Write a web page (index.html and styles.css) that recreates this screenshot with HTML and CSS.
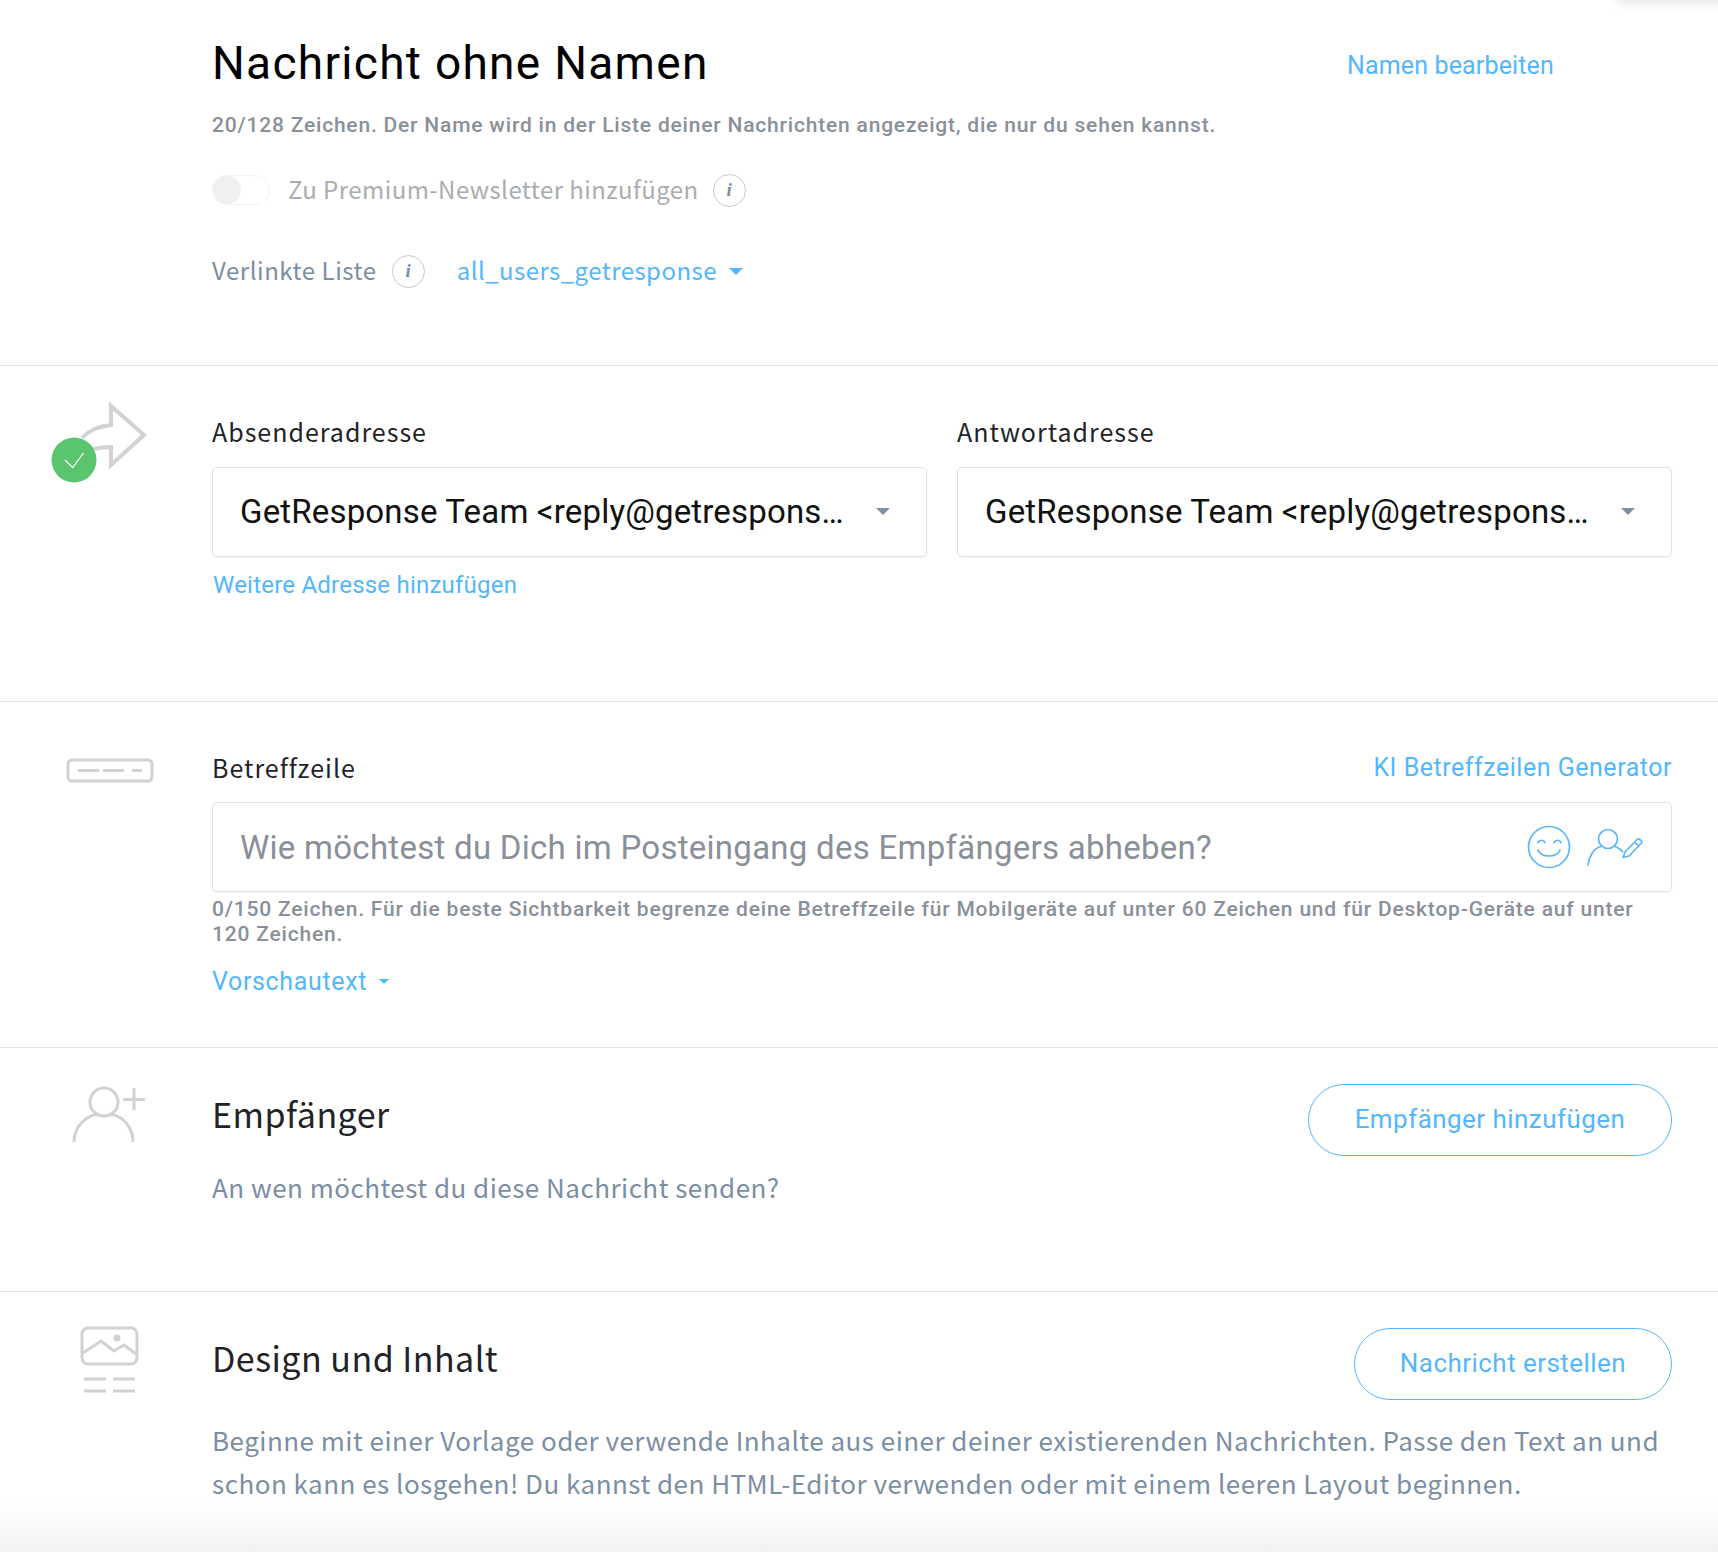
FILE: index.html
```html
<!DOCTYPE html>
<html lang="de">
<head>
<meta charset="utf-8">
<title>Nachricht ohne Namen</title>
<link rel="stylesheet" href="styles.css">
</head>
<body>
<div class="corner-shadow"></div>
<main class="page">
  <section class="head">
    <div class="title-row">
      <h1 class="title">Nachricht ohne Namen</h1>
      <a class="link edit">Namen bearbeiten</a>
    </div>
    <p class="hint hint-name">20/128 Zeichen. Der Name wird in der Liste deiner Nachrichten angezeigt, die nur du sehen kannst.</p>
    <div class="premium">
      <span class="toggle"><span class="knob"></span></span>
      <span class="premium-label">Zu Premium-Newsletter hinzufügen</span>
      <span class="info">i</span>
    </div>
    <div class="list-row">
      <span class="list-label">Verlinkte Liste</span>
      <span class="info">i</span>
      <a class="link list-link">all_users_getresponse</a>
      <span class="caret caret-blue"></span>
    </div>
  </section>

  <section class="row row-from">
    <div class="icon-col">
      <svg class="ic-from" width="100" height="90" viewBox="0 0 100 90">
        <path d="M32 42C40 33 50 30 61 29V10L94 39L61 69V51C54 51 48 52 43 53" fill="none" stroke="#d2d2d2" stroke-width="4"/>
        <circle cx="24" cy="64" r="22.5" fill="#5bc46f"/>
        <path d="M15 64L22.700 71.700L33.500 57" fill="none" stroke="#fff" stroke-width="1.200"/>
      </svg>
    </div>
    <div class="content">
      <div class="two-col">
        <div class="field">
          <label class="label">Absenderadresse</label>
          <div class="select"><span class="select-text">GetResponse Team &lt;reply@getrespons…</span><span class="caret caret-grey"></span></div>
          <a class="link add-address">Weitere Adresse hinzufügen</a>
        </div>
        <div class="field">
          <label class="label">Antwortadresse</label>
          <div class="select"><span class="select-text">GetResponse Team &lt;reply@getrespons…</span><span class="caret caret-grey"></span></div>
        </div>
      </div>
    </div>
  </section>

  <section class="row row-subject">
    <div class="icon-col">
      <svg class="ic-subject" width="88" height="28" viewBox="0 0 88 28">
        <rect x="2" y="3" width="84" height="21" rx="4" fill="none" stroke="#d2d2d2" stroke-width="3"/>
        <path d="M13 13.500H32M38 13.500H57M67 13.500H75" stroke="#d2d2d2" stroke-width="3" stroke-linecap="round"/>
      </svg>
    </div>
    <div class="content">
      <div class="label-row">
        <label class="label">Betreffzeile</label>
        <a class="link ki">KI Betreffzeilen Generator</a>
      </div>
      <div class="subject">
        <span class="placeholder">Wie möchtest du Dich im Posteingang des Empfängers abheben?</span>
        <svg class="ic-smile" width="44" height="44" viewBox="0 0 44 44" fill="none" stroke="#5ab8f5" stroke-width="1.700" stroke-linecap="round">
          <circle cx="22" cy="22" r="20.500"/>
          <path d="M11 17.500C12.500 14.500 16.500 14.500 18 17.500M27 17.500C28.500 14.500 32.500 14.500 34 17.500M11 25C14 33 30 33 33 25"/>
        </svg>
        <svg class="ic-person" width="56" height="38" viewBox="0 0 56 38" fill="none" stroke="#5ab8f5" stroke-width="1.700" stroke-linecap="round" stroke-linejoin="round">
          <circle cx="21" cy="11" r="9.500"/>
          <path d="M1 37C2 28 7 20 14 18.500M28 18.500C31 19.500 33.500 21 35.500 23.500"/>
          <path d="M36 29.500L38 24L50 11.500C52 9.500 56 13 54 15.500L42 28Z M47.500 14L51.500 18"/>
        </svg>
      </div>
      <p class="hint hint-subject">0/150 Zeichen. Für die beste Sichtbarkeit begrenze deine Betreffzeile für Mobilgeräte auf unter 60 Zeichen und für Desktop-Geräte auf unter 120 Zeichen.</p>
      <div class="preview"><a class="link preview-link">Vorschautext</a><span class="caret caret-blue caret-small"></span></div>
    </div>
  </section>

  <section class="row row-recipients">
    <div class="icon-col">
      <svg class="ic-recipient" width="76" height="58" viewBox="0 0 76 58" fill="none" stroke="#d2d2d2" stroke-width="3">
        <circle cx="32" cy="16" r="14"/>
        <path d="M2 56C2 41 14 29 26 28.500M38 28.500C50 29 61 41 61 56"/>
        <path d="M51 13.500H73M62 2V24"/>
      </svg>
    </div>
    <div class="content action-content">
      <div class="action-row">
        <h2 class="heading">Empfänger</h2>
        <a class="button btn-recipient">Empfänger hinzufügen</a>
      </div>
      <p class="desc desc-recipient">An wen möchtest du diese Nachricht senden?</p>
    </div>
  </section>

  <section class="row row-design">
    <div class="icon-col">
      <svg class="ic-design" width="60" height="68" viewBox="0 0 60 68" fill="none" stroke="#d2d2d2" stroke-width="3">
        <rect x="2" y="2" width="55" height="36" rx="6"/>
        <path d="M3 27L21 15L34 25L44 19L56 28"/>
        <circle cx="37" cy="12" r="3.500" fill="#d2d2d2" stroke="none"/>
        <path d="M4 53H26M33 53H55M4 65H26M33 65H55"/>
      </svg>
    </div>
    <div class="content action-content">
      <div class="action-row">
        <h2 class="heading">Design und Inhalt</h2>
        <a class="button btn-design">Nachricht erstellen</a>
      </div>
      <p class="desc desc-design">Beginne mit einer Vorlage oder verwende Inhalte aus einer deiner existierenden Nachrichten. Passe den Text an und schon kann es losgehen! Du kannst den HTML-Editor verwenden oder mit einem leeren Layout beginnen.</p>
    </div>
  </section>
</main>
<div class="bottom-fade"></div>
</body>
</html>
```

FILE: styles.css
```css
* { box-sizing: border-box; }
html, body { margin: 0; padding: 0; }
body {
  width: 1718px;
  height: 1552px;
  overflow: hidden;
  position: relative;
  background: #fff;
  font-family: Roboto, "Liberation Sans", sans-serif;
  color: #1f2328;
}
.page { display: flex; flex-direction: column; }
p, h1, h2 { margin: 0; font-weight: 400; }
.link { color: #54b7fd; }

.head { height: 366px; padding: 34px 46px 0 212px; border-bottom: 1px solid #e3e3e3; }
.title-row { display: flex; justify-content: space-between; align-items: center; padding-right: 118px; }
.title { font-size: 46px; line-height: 58px; letter-spacing: 1.3px; color: #000; }
.edit { font-size: 25px; letter-spacing: 0.15px; margin-top: 5px; }
.hint { color: #8a9099; font-weight: 500; font-size: 21px; line-height: 25px; letter-spacing: 0.8px; }
.hint-name { margin-top: 21px; }
.premium { display: flex; align-items: center; margin-top: 35px; height: 34px; }
.toggle { width: 58px; height: 30px; border: 1px solid #f4f4f4; border-radius: 15px; margin-right: 18px; display: block; }
.knob { display: block; width: 28px; height: 28px; border-radius: 50%; background: #f0f0f0; }
.premium-label { font-family: "Noto Sans CJK JP", Lato, sans-serif; font-size: 24px; line-height: 34px; color: #a9adb1; letter-spacing: 0.44px; padding-bottom: 2px; }
.info {
  width: 33px; height: 33px; border: 1px solid #c9c9c9; border-radius: 50%;
  display: flex; align-items: center; justify-content: center;
  font: italic 700 19px "Liberation Serif", serif; color: #7c8ea3;
}
.premium .info { margin-left: 14px; }
.list-row { display: flex; align-items: center; margin-top: 47px; height: 34px; }
.list-label { font-family: "Noto Sans CJK JP", Lato, sans-serif; font-size: 24px; line-height: 34px; color: #7b8ea3; letter-spacing: 0.55px; margin-right: 15px; padding-bottom: 2px; }
.list-link { font-family: "Noto Sans CJK JP", Lato, sans-serif; font-size: 24px; line-height: 34px; letter-spacing: 0.44px; margin-left: 32px; padding-bottom: 2px; }
.caret { width: 0; height: 0; border-style: solid; border-color: transparent; border-width: 7px 7px 0 7px; display: block; }
.caret-blue { border-top-color: #54b7fd; margin-left: 12px; }
.caret-grey { border-top-color: #7f90a5; }
.caret-small { border-width: 5px 5px 0 5px; }

.row { display: flex; border-bottom: 1px solid #e3e3e3; }
.icon-col { width: 212px; flex: none; position: relative; }
.content { flex: 1; padding-right: 46px; min-width: 0; }

.row-from { height: 336px; }
.row-from .content { padding-top: 52px; }
.ic-from { display: block; margin: 30px 0 0 50px; }
.two-col { display: grid; grid-template-columns: 715px 715px; column-gap: 30px; }
.label { font-family: "Noto Sans CJK JP", Lato, sans-serif; font-size: 25px; line-height: 26px; padding-bottom: 4px; letter-spacing: 1px; color: #1f2328; display: block; }
.select {
  margin-top: 19px; height: 90px; border: 1px solid #e1e1e1; border-radius: 5px;
  display: flex; align-items: center; justify-content: space-between;
  padding: 0 36px 2px 27px; box-shadow: 0 1px 2px rgba(0,0,0,.05);
}
.select-text { font-size: 33px; letter-spacing: 0.17px; color: #111; }
.add-address { display: block; font-size: 24px; margin-top: 14px; letter-spacing: 0.22px; padding-left: 1px; }

.row-subject { height: 346px; }
.row-subject .content { padding-top: 52px; }
.ic-subject { display: block; margin: 55px 0 0 66px; }
.label-row { display: flex; justify-content: space-between; align-items: center; }
.ki { font-size: 25px; letter-spacing: 0.52px; margin-top: -3px; }
.subject {
  margin-top: 18px; height: 90px; border: 1px solid #e1e1e1; border-radius: 5px;
  display: flex; align-items: center; padding: 0 28px 0 27px; box-shadow: 0 1px 2px rgba(0,0,0,.05);
}
.placeholder { font-size: 33px; letter-spacing: 0.27px; color: #8a9099; flex: 1; }
.ic-smile { display: block; }
.ic-person { display: block; margin-left: 16px; }
.hint-subject { margin-top: 5px; }
.preview { display: flex; align-items: center; margin-top: 20px; }
.preview-link { font-size: 25px; letter-spacing: 0.65px; }

.row-recipients { height: 244px; }
.ic-recipient { display: block; margin: 38px 0 0 72px; }
.action-content { padding-top: 36px; }
.action-row { display: flex; justify-content: space-between; align-items: flex-start; }
.heading { font-family: "Noto Sans CJK JP", Lato, sans-serif; font-size: 34px; line-height: 44px; letter-spacing: 0.47px; color: #1f2328; padding-top: 8px; }
.button {
  display: flex; align-items: center; justify-content: center; height: 72px; padding-bottom: 2px;
  border: 1px solid #54b7fd; border-radius: 36px; font-size: 26px; letter-spacing: 0.45px; color: #54b7fd;
}
.btn-recipient { width: 364px; }
.btn-design { width: 318px; }
.desc { font-family: "Noto Sans CJK JP", Lato, sans-serif; font-size: 26px; color: #7b8ea3; letter-spacing: 0.48px; line-height: 43px; }
.desc-recipient { margin-top: 9px; }

.row-design { border-bottom: 0; flex: 1; }
.ic-design { display: block; margin: 34px 0 0 80px; }
.desc-design { margin-top: 18px; }

.corner-shadow {
  position: absolute; right: -20px; top: -30px; width: 120px; height: 30px;
  box-shadow: 0 2px 12px rgba(0,0,0,.12);
}
.bottom-fade {
  position: absolute; left: 0; right: 0; bottom: 0; height: 50px;
  background: linear-gradient(rgba(240,240,240,0), #f2f2f2);
  pointer-events: none;
}
```
